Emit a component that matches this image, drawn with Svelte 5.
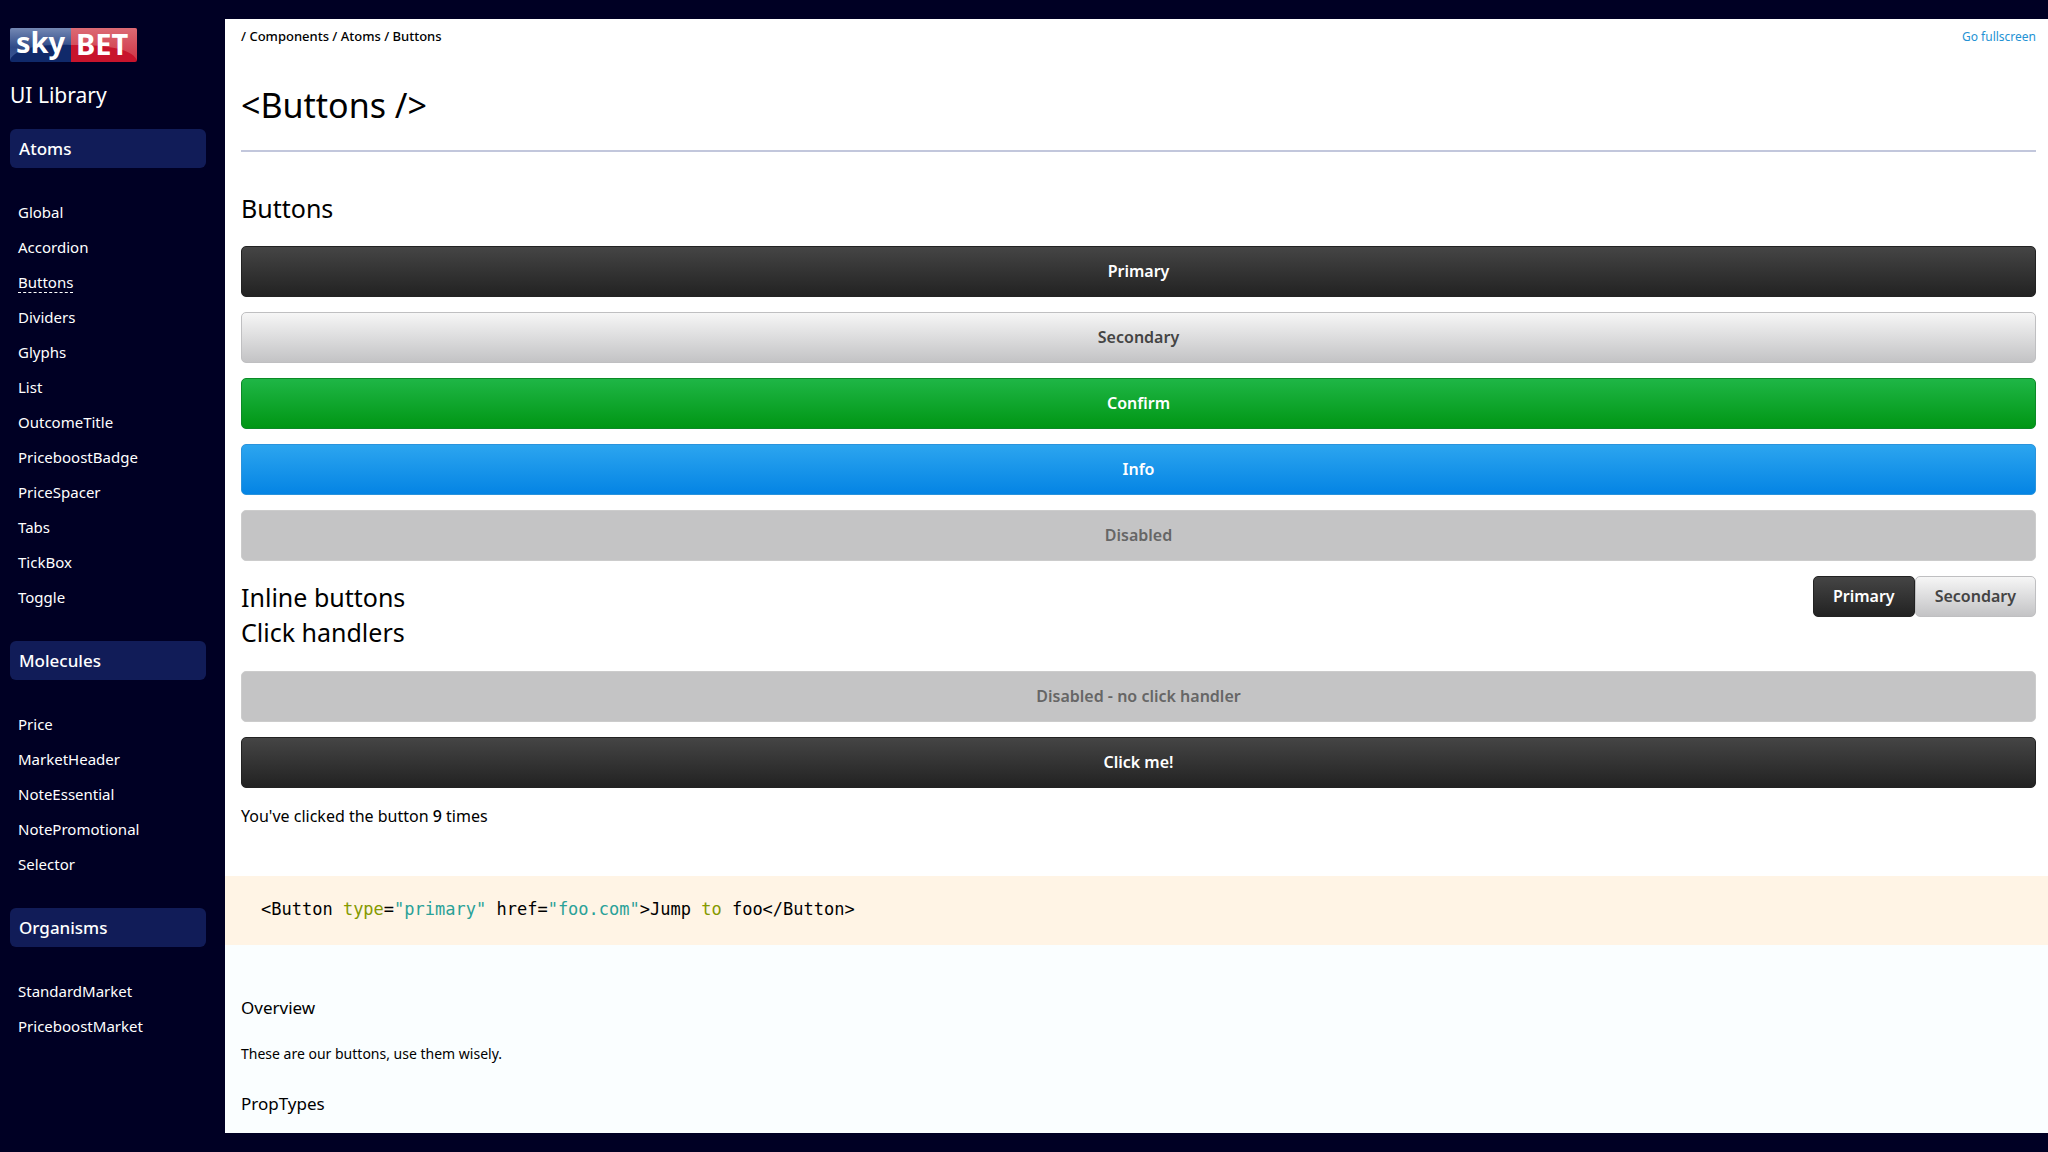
<script>
  const groups = [
    {
      name: 'Atoms',
      items: ['Global', 'Accordion', 'Buttons', 'Dividers', 'Glyphs', 'List', 'OutcomeTitle', 'PriceboostBadge', 'PriceSpacer', 'Tabs', 'TickBox', 'Toggle'],
    },
    {
      name: 'Molecules',
      items: ['Price', 'MarketHeader', 'NoteEssential', 'NotePromotional', 'Selector'],
    },
    { name: 'Organisms', items: ['StandardMarket', 'PriceboostMarket'] },
  ];
  const current = 'Buttons';
  let clicks = $state(9);
</script>

<div class="page">
  <aside class="sidebar">
    <svg class="logo" width="127" height="34" viewBox="0 0 127 34" role="img" aria-label="sky BET">
      <defs>
        <linearGradient id="blue-gloss" x1="0" y1="0" x2="0" y2="1">
          <stop offset="0" stop-color="#7488b4" />
          <stop offset="0.6" stop-color="#2f4a88" />
          <stop offset="1" stop-color="#3a5592" />
        </linearGradient>
        <linearGradient id="red-gloss" x1="0" y1="0" x2="0" y2="1">
          <stop offset="0" stop-color="#dc6a74" />
          <stop offset="1" stop-color="#cf3546" />
        </linearGradient>
        <clipPath id="logo-frame"><rect width="127" height="34" rx="2" /></clipPath>
      </defs>
      <g clip-path="url(#logo-frame)">
        <rect width="61" height="34" fill="#10296a" />
        <rect x="61" width="66" height="34" fill="#c8142c" />
        <path d="M0 0H61V17C35 16 6 19 0 32Z" fill="url(#blue-gloss)" />
        <path d="M61 0H127V32C120 19 92 17 61 17Z" fill="url(#red-gloss)" />
      </g>
      <text x="6" y="25">sky</text>
      <text x="66" y="27">BET</text>
    </svg>
    <p class="title">UI Library</p>
    <nav aria-label="Library">
      {#each groups as group}
        <h2 class="group">{group.name}</h2>
        <ul>
          {#each group.items as item}
            <li><a href="#{item}" class:current={item === current}>{item}</a></li>
          {/each}
        </ul>
      {/each}
    </nav>
  </aside>

  <main>
    <div class="demo">
      <div class="topline">
        <span>/ Components / Atoms / Buttons</span>
        <a href="#fullscreen">Go fullscreen</a>
      </div>
      <h1>&lt;Buttons /&gt;</h1>
      <h2>Buttons</h2>
      <div class="stack">
        <button class="btn primary">Primary</button>
        <button class="btn secondary">Secondary</button>
        <button class="btn confirm">Confirm</button>
        <button class="btn info">Info</button>
        <button class="btn" disabled>Disabled</button>
      </div>
      <div class="inline-row">
        <h2>Inline buttons</h2>
        <div class="inline-buttons">
          <button class="btn small primary">Primary</button>
          <button class="btn small secondary">Secondary</button>
        </div>
      </div>
      <h2 class="handlers">Click handlers</h2>
      <div class="stack">
        <button class="btn" disabled>Disabled - no click handler</button>
        <button class="btn primary" onclick={() => clicks++}>Click me!</button>
      </div>
      <p class="count">You've clicked the button <strong>{clicks}</strong> times</p>
    </div>

    <pre class="code"><code>&lt;Button <span class="key">type</span>=<span class="str">"primary"</span> href=<span class="str">"foo.com"</span>&gt;Jump <span class="key">to</span> foo&lt;/Button&gt;</code></pre>

    <section class="docs">
      <h3>Overview</h3>
      <p>These are our buttons, use them wisely.</p>
      <h3>PropTypes</h3>
    </section>
  </main>
</div>

<style>
  :global(body) {
    background: #000024;
  }

  .page {
    box-sizing: border-box;
    min-height: 100vh;
    padding: 19px 0;
    display: flex;
    font-family: 'Noto Sans', 'Open Sans', sans-serif;
    font-size: 16px;
    color: #000;
  }

  h1, h2, h3, p, ul, pre {
    margin: 0;
    padding: 0;
    font-weight: 400;
  }

  a {
    color: inherit;
    text-decoration: none;
  }

  .sidebar {
    box-sizing: border-box;
    flex: 0 0 225px;
    padding: 9px 19px 0 10px;
    color: #fff;
  }

  .logo {
    display: block;
    overflow: visible;
  }

  .logo text {
    fill: #fff;
    font-weight: 700;
    font-size: 29px;
  }

  .title {
    margin: 18px 0 19px;
    font-size: 21px;
    font-weight: 400;
    line-height: 30px;
  }

  .group {
    padding: 0 9px;
    border-radius: 6px;
    background: #111c58;
    font-size: 17px;
    font-weight: 500;
    line-height: 39px;
  }

  ul {
    margin: 26px 0 27px;
    padding: 0 8px;
    list-style: none;
  }

  li {
    display: flex;
    align-items: center;
    height: 35px;
    font-size: 15px;
    line-height: 20px;
  }

  .current {
    margin-bottom: -1px;
    border-bottom: 1px dashed #fff;
  }

  main {
    flex: 1;
    min-width: 0;
    display: flex;
    flex-direction: column;
    background: #fff;
  }

  .demo {
    padding: 8px 12px 0 16px;
  }

  .topline {
    display: flex;
    justify-content: space-between;
    align-items: baseline;
    font-size: 13px;
    font-weight: 500;
    line-height: 18px;
  }

  .topline a {
    color: #2492d4;
    font-size: 12px;
    font-weight: 400;
  }

  h1 {
    padding: 35px 0 21px;
    border-bottom: 2px solid #c2c7dc;
    font-size: 34px;
    line-height: 48px;
  }

  .demo h2 {
    font-size: 25px;
    line-height: 36px;
  }

  h1 + h2 {
    margin: 38px 0 20px;
  }

  .stack {
    display: flex;
    flex-direction: column;
    gap: 15px;
  }

  .btn {
    box-sizing: border-box;
    width: 100%;
    height: 51px;
    padding: 0 19px 2px;
    border: 1px solid #ccc;
    border-radius: 5px;
    background: #c4c4c5;
    color: #666;
    font: inherit;
    font-size: 16px;
    font-weight: 600;
  }

  .small {
    width: auto;
    height: 41px;
  }

  .primary {
    border-color: #222;
    background: linear-gradient(#454545, #222);
    color: #fff;
  }

  .secondary {
    border-color: #bfbfc1;
    background: linear-gradient(#f6f6f6, #c3c3c5);
    color: #444;
  }

  .confirm {
    border-color: #0b8a26;
    background: linear-gradient(#1fb646, #009614);
    color: #fff;
  }

  .info {
    border-color: #2a93dc;
    background: linear-gradient(#2ca5ef, #0484e4);
    color: #fff;
  }

  .inline-row {
    display: flex;
    justify-content: space-between;
    align-items: center;
    margin-top: 15px;
  }

  .inline-buttons {
    display: flex;
  }

  .demo .handlers {
    margin: -3px 0 21px;
  }

  .count {
    margin: 16px 0 48px;
    line-height: 24px;
  }

  .count strong {
    font-weight: 500;
  }

  .code {
    padding: 21px 36px 23px;
    background: #fff4e5;
    line-height: 24px;
  }

  .code code {
    font-family: 'DejaVu Sans Mono', monospace;
    font-size: 17px;
  }

  .key {
    color: #859900;
  }

  .str {
    color: #2aa198;
  }

  .docs {
    flex: 1;
    padding: 51px 16px 16px;
    background: #fafeff;
  }

  h3 {
    font-size: 17px;
    font-weight: 400;
    line-height: 24px;
  }

  .docs p {
    margin: 22px 0 26px;
    font-size: 14px;
    line-height: 24px;
  }
</style>
